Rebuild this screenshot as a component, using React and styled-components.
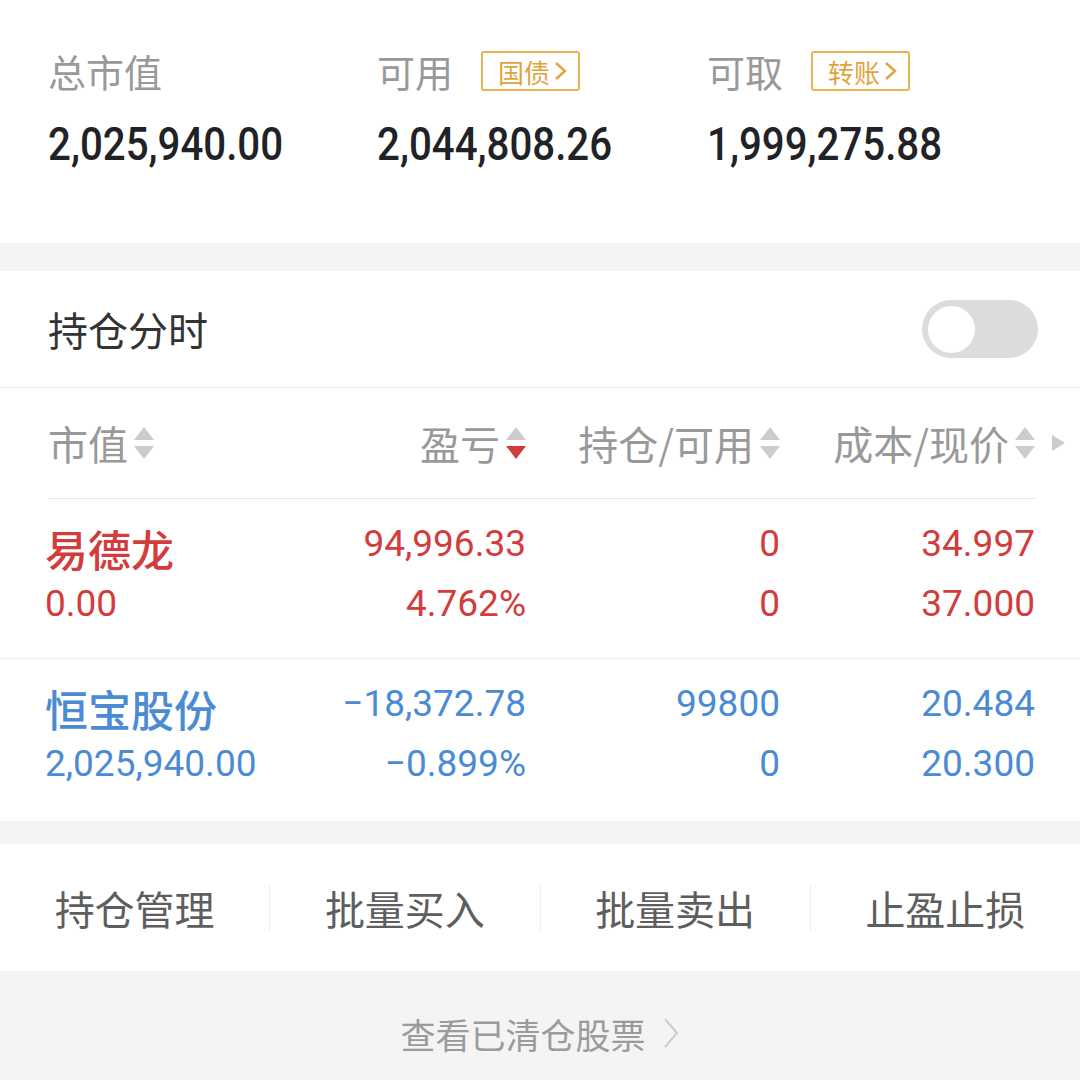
import React from "react";
import styled, { createGlobalStyle } from "styled-components";

const RED = "#d23c3c";
const BLUE = "#4b8bd4";

const summary = [
  { label: "总市值", value: "2,025,940.00" },
  { label: "可用", value: "2,044,808.26", badge: "国债" },
  { label: "可取", value: "1,999,275.88", badge: "转账" },
];

const positions = [
  {
    name: "易德龙",
    tone: RED,
    cells: [
      ["0.00", "94,996.33", "4.762%"],
      ["0", "0"],
      ["34.997", "37.000"],
    ],
  },
  {
    name: "恒宝股份",
    tone: BLUE,
    cells: [
      ["2,025,940.00", "\u221218,372.78", "\u22120.899%"],
      ["99800", "0"],
      ["20.484", "20.300"],
    ],
  },
];

const actions = ["持仓管理", "批量买入", "批量卖出", "止盈止损"];

const App = () => (
  <>
    <GlobalStyle />
    <Page>
      <Summary>
        {summary.map((s) => (
          <SummaryCell key={s.label}>
            <LabelRow>
              <Label>{s.label}</Label>
              {s.badge && (
                <Badge>
                  {s.badge}
                  <svg width="13" height="20" viewBox="0 0 13 20">
                    <polyline points="2,2 11,10 2,18" fill="none" stroke="#e2a33c" strokeWidth="2.4" />
                  </svg>
                </Badge>
              )}
            </LabelRow>
            <Amount>{s.value}</Amount>
          </SummaryCell>
        ))}
      </Summary>

      <Card>
        <ToggleRow>
          <Title>持仓分时</Title>
          <Switch>
            <Knob />
          </Switch>
        </ToggleRow>

        <HeaderRow>
          <Grid>
            <HeadCell $align="start">
              市值
              <Sort />
            </HeadCell>
            <HeadCell>
              盈亏
              <Sort $down={RED} />
            </HeadCell>
            <HeadCell>
              持仓/可用
              <Sort />
            </HeadCell>
            <HeadCell>
              成本/现价
              <Sort />
            </HeadCell>
            <More />
          </Grid>
        </HeaderRow>

        {positions.map((p) => (
          <StockRow key={p.name}>
            <Grid>
              <Col $align="start" $tone={p.tone}>
                <Name>{p.name}</Name>
                <Num>{p.cells[0][0]}</Num>
              </Col>
              <Col $tone={p.tone}>
                <Num>{p.cells[0][1]}</Num>
                <Num>{p.cells[0][2]}</Num>
              </Col>
              <Col $tone={p.tone}>
                <Num>{p.cells[1][0]}</Num>
                <Num>{p.cells[1][1]}</Num>
              </Col>
              <Col $tone={p.tone}>
                <Num>{p.cells[2][0]}</Num>
                <Num>{p.cells[2][1]}</Num>
              </Col>
            </Grid>
          </StockRow>
        ))}
      </Card>

      <ActionBar>
        {actions.map((a) => (
          <Action key={a}>{a}</Action>
        ))}
      </ActionBar>

      <Footer>
        查看已清仓股票
        <svg width="18" height="34" viewBox="0 0 18 34">
          <polyline points="3,3 15,17 3,31" fill="none" stroke="#cccccc" strokeWidth="2" />
        </svg>
      </Footer>
    </Page>
  </>
);

const Sort = ({ $down }) => (
  <SortWrap>
    <Tri $up />
    <Tri $color={$down} />
  </SortWrap>
);

const GlobalStyle = createGlobalStyle`
  body {
    margin: 0;
    background: #f4f4f4;
    font-family: Roboto, "Noto Sans CJK SC", sans-serif;
  }
`;

const Page = styled.div`
  width: 1080px;
  height: 1080px;
  overflow: hidden;
  background: #f4f4f4;
`;

const Summary = styled.section`
  height: 243px;
  box-sizing: border-box;
  padding: 46px 0 0 48px;
  background: #fff;
  display: grid;
  grid-template-columns: 329px 330px 330px;
  align-content: start;
`;

const SummaryCell = styled.div`
  display: flex;
  flex-direction: column;
`;

const LabelRow = styled.div`
  height: 50px;
  display: flex;
  align-items: center;
  gap: 28px;
`;

const Label = styled.span`
  font-family: "Noto Sans CJK SC", sans-serif;
  font-size: 38px;
  color: #999;
  line-height: 50px;
`;

const Badge = styled.span`
  width: 99px;
  height: 40px;
  box-sizing: border-box;
  border: 2px solid #e9b44f;
  border-radius: 3px;
  display: flex;
  align-items: center;
  justify-content: center;
  gap: 4px;
  font-family: "Noto Sans CJK SC", sans-serif;
  font-size: 26px;
  color: #e2a33c;
  svg {
    margin-right: -4px;
  }
`;

const Amount = styled.span`
  margin-top: 23px;
  display: inline-block;
  font-size: 46px;
  font-weight: 500;
  line-height: 50px;
  color: #1f2226;
  transform: scaleX(0.875);
  transform-origin: left center;
  white-space: nowrap;
`;

const Card = styled.section`
  margin-top: 28px;
  background: #fff;
`;

const ToggleRow = styled.div`
  height: 116px;
  padding: 0 42px 0 48px;
  display: flex;
  align-items: center;
  justify-content: space-between;
  border-bottom: 1px solid #eeeeee;
`;

const Title = styled.span`
  font-family: "Noto Sans CJK SC", sans-serif;
  font-size: 40px;
  color: #333;
`;

const Switch = styled.div`
  width: 116px;
  height: 58px;
  box-sizing: border-box;
  padding: 0 6px;
  border-radius: 29px;
  background: #dcdcdc;
  display: flex;
  align-items: center;
`;

const Knob = styled.div`
  width: 47px;
  height: 47px;
  border-radius: 50%;
  background: #fff;
`;

const HeaderRow = styled.div`
  height: 110px;
  margin: 0 45px 0 48px;
  display: flex;
  align-items: center;
  border-bottom: 1px solid #e6e6e6;
`;

const Grid = styled.div`
  width: 100%;
  display: grid;
  grid-template-columns: 282px 196px 254px 255px 1fr;
  align-items: center;
`;

const HeadCell = styled.div`
  justify-self: ${(p) => (p.$align === "start" ? "start" : "end")};
  display: flex;
  align-items: center;
  gap: 6px;
  font-family: "Noto Sans CJK SC", sans-serif;
  font-size: 40px;
  line-height: 50px;
  color: #999;
`;

const SortWrap = styled.span`
  display: flex;
  flex-direction: column;
  gap: 6px;
`;

const Tri = styled.span`
  width: 0;
  height: 0;
  border-left: 10px solid transparent;
  border-right: 10px solid transparent;
  ${(p) =>
    p.$up
      ? `border-bottom: 13px solid #cccccc;`
      : `border-top: 13px solid ${p.$color || "#cccccc"};`}
`;

const More = styled.span`
  justify-self: start;
  margin-left: 17px;
  width: 0;
  height: 0;
  border-top: 8px solid transparent;
  border-bottom: 8px solid transparent;
  border-left: 13px solid #cccccc;
`;

const StockRow = styled.div`
  padding: 15px 45px 24px 48px;
  border-bottom: 1px solid #eeeeee;
  &:last-child {
    border-bottom: none;
    padding-bottom: 27px;
  }
`;

const Col = styled.div`
  display: flex;
  flex-direction: column;
  align-items: ${(p) => (p.$align === "start" ? "flex-start" : "flex-end")};
  color: ${(p) => p.$tone};
`;

const Name = styled.span`
  margin-left: -3px;
  font-family: "Noto Sans CJK SC", sans-serif;
  font-size: 43px;
  font-weight: 500;
  line-height: 60px;
  height: 60px;
  padding-top: 4px;
  box-sizing: border-box;
`;

const Num = styled.span`
  font-size: 37px;
  line-height: 60px;
  white-space: nowrap;
  ${Name} + & {
    margin-left: -3px;
  }
`;

const ActionBar = styled.nav`
  margin-top: 23px;
  height: 127px;
  background: #fff;
  display: flex;
  align-items: center;
`;

const Action = styled.div`
  flex: 1;
  height: 46px;
  display: flex;
  align-items: center;
  justify-content: center;
  font-family: "Noto Sans CJK SC", sans-serif;
  font-size: 40px;
  color: #5e5e5e;
  & + & {
    border-left: 1px solid #eeeeee;
  }
`;

const Footer = styled.div`
  height: 110px;
  box-sizing: border-box;
  padding-top: 14px;
  display: flex;
  align-items: center;
  justify-content: center;
  gap: 16px;
  font-family: "Noto Sans CJK SC", sans-serif;
  font-size: 35px;
  color: #9b9b9b;
`;

export default App;
